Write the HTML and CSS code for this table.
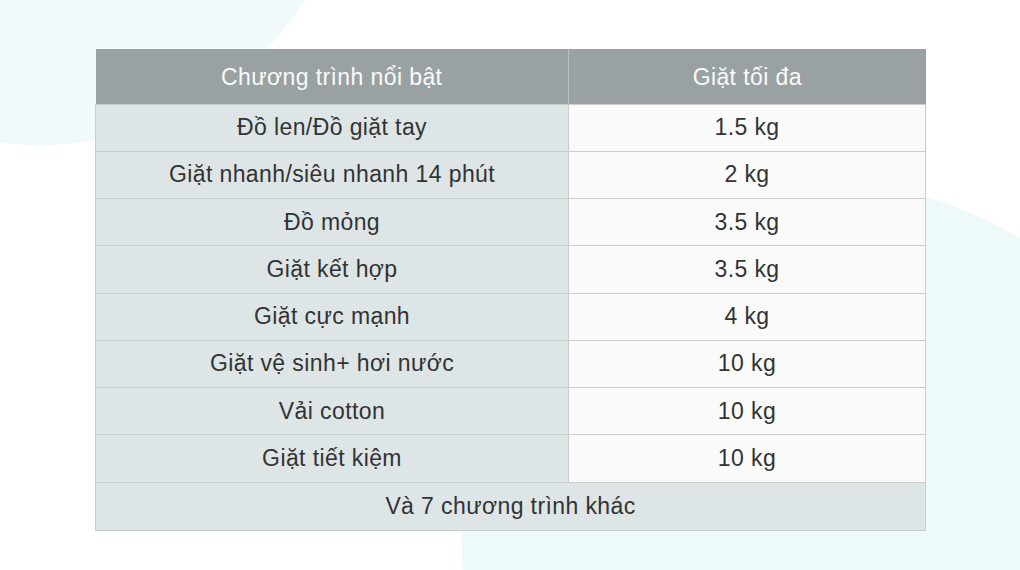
FILE: index.html
```html
<!DOCTYPE html>
<html lang="vi">
<head>
<meta charset="utf-8">
<link rel="stylesheet" href="styles.css">
</head>
<body>
<div class="scene">
  <div class="blob blob-tl"></div>
  <div class="blob blob-br"></div>
  <main class="page">
    <table class="spec">
      <thead>
        <tr><th class="c1">Chương trình nổi bật</th><th class="c2">Giặt tối đa</th></tr>
      </thead>
      <tbody>
        <tr><td class="c1">Đồ len/Đồ giặt tay</td><td class="c2">1.5 kg</td></tr>
        <tr><td class="c1">Giặt nhanh/siêu nhanh 14 phút</td><td class="c2">2 kg</td></tr>
        <tr><td class="c1">Đồ mỏng</td><td class="c2">3.5 kg</td></tr>
        <tr><td class="c1">Giặt kết hợp</td><td class="c2">3.5 kg</td></tr>
        <tr><td class="c1">Giặt cực mạnh</td><td class="c2">4 kg</td></tr>
        <tr><td class="c1">Giặt vệ sinh+ hơi nước</td><td class="c2">10 kg</td></tr>
        <tr><td class="c1">Vải cotton</td><td class="c2">10 kg</td></tr>
        <tr><td class="c1">Giặt tiết kiệm</td><td class="c2">10 kg</td></tr>
        <tr><td class="c1 full" colspan="2">Và 7 chương trình khác</td></tr>
      </tbody>
    </table>
  </main>
</div>
</body>
</html>
```
FILE: styles.css
```css
html, body {
  margin: 0;
  padding: 0;
  background: #ffffff;
  font-family: "Liberation Sans", Arial, sans-serif;
}
.scene {
  position: relative;
  width: 1020px;
  height: 570px;
  overflow: hidden;
}
.blob {
  position: absolute;
  border-radius: 50%;
  z-index: 0;
}
.blob-tl {
  left: -275px;
  top: -485px;
  width: 630px;
  height: 630px;
  background: #f2f9fb;
}
.blob-br {
  left: 462px;
  top: 184px;
  width: 732px;
  height: 732px;
  background: #eef9fa;
}
.page {
  position: relative;
  z-index: 1;
  padding: 49px 0 0 95px;
}
.spec {
  border-collapse: collapse;
  width: 831px;
  table-layout: fixed;
  color: #333333;
  font-size: 23px;
  letter-spacing: 0.4px;
}
.spec th {
  background: #9aa1a3;
  color: #f9fafa;
  font-weight: normal;
  height: 55px;
  padding: 3px 0 0 0;
  box-sizing: border-box;
  text-align: center;
  border-left: 1px solid #b9bec0;
}
.spec th:first-child { border-left: none; }
.spec th.c1 { width: 473px; }
.spec td {
  height: 46.25px;
  padding: 0;
  text-align: center;
  border: 1px solid #c9cdce;
}
.spec td.c1 { background: #dde5e6; }
.spec td.c2 { background: #fafafa; }
.spec td.full { background: #dde5e6; height: 47px; }
```
